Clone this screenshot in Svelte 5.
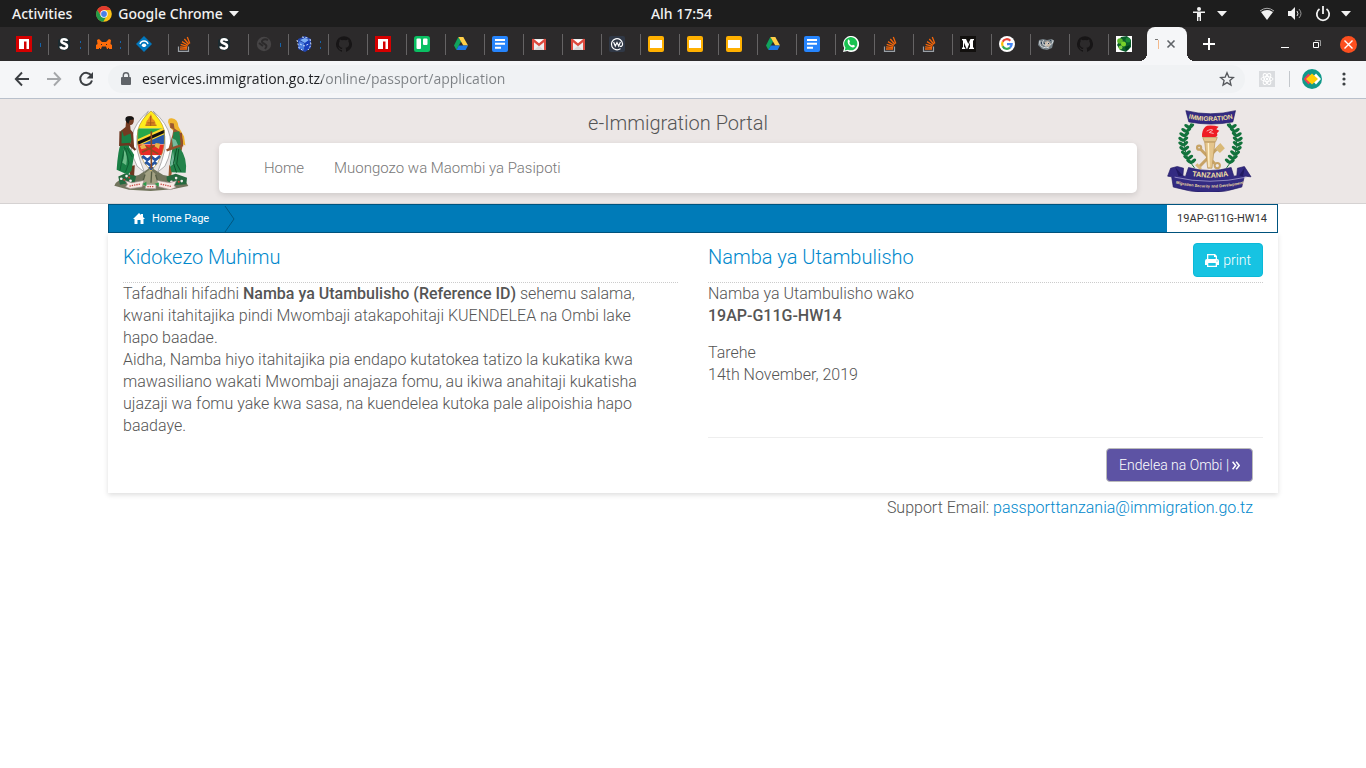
<script>
  const tabs = [
    ['npm', 'one'], ['s', 'two'], ['fox', 'two'], ['diamond', ''], ['stack', ''], ['s', ''], ['globe', 'one'], ['hex', 'two'],
    ['github', ''], ['npm', ''], ['trello', ''], ['drive', ''], ['docs', ''], ['gmail', ''], ['gmail', ''], ['workplace', ''],
    ['slides', ''], ['slides', ''], ['slides', ''], ['drive', ''], ['docs', ''], ['whatsapp', ''], ['stack', ''], ['stack', ''],
    ['medium', ''], ['google', ''], ['gnu', ''], ['github', ''], ['green', '']
  ];
  const leaves = [0, 1, 2, 3, 4, 5, 6, 7, 8];
  const leafX = [202, 193, 187, 184, 184, 187, 192, 199, 208];
  const leafY = [84, 96, 109, 123, 137, 151, 165, 178, 190];
  let address = $state('eservices.immigration.go.tz/online/passport/application');
</script>

{#snippet favicon(kind)}
  <svg class="fav" viewBox="0 0 16 16" aria-hidden="true">
    {#if kind === 'npm'}
      <path fill="#d50000" d="M0 0h16v16H0z" /><path fill="#fff" d="M3 3h10v10h-2.500V5.500H8V13H3z" />
    {:else if kind === 's'}
      <path fill="#1b2a30" d="M2 4 8 1l6 3v8l-6 3-6-3z" />
      <path fill="none" stroke="#fff" stroke-width="2.600" d="M11 5C10.600 2.800 5.400 2.300 5.400 5.200c0 2.800 5.600 1.900 5.600 4.900 0 3.500-6 3-6.400.3" />
    {:else if kind === 'fox'}
      <path fill="#ff6c0a" d="M0 13V9l1.500-1L1 4l2-1 3 3h4l3-3 2 1-.5 4L16 9v4h-5l-1-2.500H6L5 13z" /><path fill="#2c2a2b" d="M3 12h1v1H3zm9 0h1v1h-1zM5 8h1v1H5zm5 0h1v1h-1z" />
    {:else if kind === 'diamond'}
      <path fill="#0277bd" d="M8 0l8 8-8 8-8-8z" /><path fill="none" stroke="#fff" stroke-width="1.300" d="M4 8.200a4.100 4.100 0 0 1 8 0" /><path fill="#fff" d="M5.500 9.500a2.600 2.600 0 0 1 5 0L9 11H7z" />
    {:else if kind === 'stack'}
      <path fill="none" stroke="#9aa0a6" stroke-width="1.200" d="M2.500 10.500v4.900h10v-4.900" />
      <path stroke="#f4660a" stroke-width="1.300" d="M4 13h7M4.100 10.900l7 .8M4.700 8.400l6.700 1.900M6 5.600l6 3.700M8.300 3l4.600 5.300M11.300 1l2.500 6.500" />
    {:else if kind === 'globe'}
      <circle cx="8" cy="8" r="7.200" fill="#464445" /><path fill="none" stroke="#2c2a2b" stroke-width="2" d="M12 4c-4-2-8 1-5 3s5 2 2 6M3 7l4 3" />
    {:else if kind === 'hex'}
      <path fill="#2446ad" d="M2 3l7-3 6 3v9l-6 4-7-3z" /><path fill="#7fb0f5" d="M4 4l5-2 4 2-4 3z" /><path fill="#173fbd" d="M9 7l4-3v8l-4 3z" /><path fill="#4c7fe0" d="M3 5l5 2v7l-5-2z" /><path fill="none" stroke="#cfe0ff" stroke-dasharray="2 1.500" d="M1 4l2 8 5 3M14 3l1 6-3 5M4 8l4 2 5-2M6 1l6 1" />
    {:else if kind === 'github'}
      <path fill="#171516" d="M8 .2a8 8 0 0 0-2.500 15.600c.4.100.5-.2.500-.4v-1.500c-2.200.5-2.700-.9-2.700-.9-.4-.9-.9-1.200-.9-1.200-.7-.5.1-.5.1-.5.800.1 1.200.8 1.200.8.700 1.200 1.900.9 2.300.7.100-.5.300-.9.500-1.100-1.800-.2-3.600-.9-3.600-4 0-.9.300-1.600.8-2.100-.1-.2-.4-1 .1-2.200 0 0 .7-.2 2.200.8a7.600 7.600 0 0 1 4 0c1.500-1 2.200-.8 2.200-.8.500 1.200.2 2 .1 2.200.5.500.8 1.200.8 2.100 0 3.100-1.900 3.800-3.700 4 .3.300.6.800.6 1.500v2.200c0 .2.100.500.500.4A8 8 0 0 0 8 .2z" />
    {:else if kind === 'trello'}
      <rect width="16" height="16" rx="2.500" fill="#0abf62" /><rect x="2.500" y="2.500" width="4.500" height="10.500" rx="1" fill="#fff" /><rect x="9" y="2.500" width="4.500" height="6.500" rx="1" fill="#fff" />
    {:else if kind === 'drive'}
      <path fill="#10a35d" d="M5.300 1 1 9.500 3.400 14 8 5.600z" /><path fill="#ffcf48" d="M5.300 1h5L15 9.500h-4.700z" /><path fill="#1c79e8" d="M5.800 9.500H15L12.600 14H3.400z" />
    {:else if kind === 'docs'}
      <rect width="16" height="16" rx="2" fill="#2684fc" /><path fill="#fff" d="M3 3h10v2H3zm0 3.700h10v2H3zm0 4h6v2H3z" />
    {:else if kind === 'gmail'}
      <path fill="#eee" d="M1 3h14v11H1z" /><path fill="#fff" d="M3 4h10l-5 4z" /><path fill="#d8d8d8" d="m3 14 5-4 5 4z" /><path fill="#dc4a3e" d="M1 14V3l1.500-.3L8 7.200l5.500-4.500L15 3v11h-2V6.200l-5 4-5-4V14z" />
    {:else if kind === 'workplace'}
      <rect width="16" height="16" rx="2" fill="#303846" /><path fill="none" stroke="#fff" stroke-width="1.200" d="M11.500 12.600A5.600 5.600 0 1 1 13.600 8c0 2.200-1.800 2.800-2.800 2.200M4.600 6l1.700 4L8 6.500 9.700 10l1.700-4" />
    {:else if kind === 'slides'}
      <rect width="16" height="16" rx="2" fill="#ffb000" /><path fill="#fff" d="M2 4h12v8H2z" />
    {:else if kind === 'whatsapp'}
      <path fill="#fff" d="M0 16 1.200 12A8 8 0 1 1 4.300 15z" /><path fill="#19c251" d="m1.700 14.400.8-2.700A6.600 6.600 0 1 1 5 13.700z" /><path fill="#fff" d="M5 3.800c1-1 1.300.2 1.900 1.700L6.300 7c.5 1.200 1.400 2 2.700 2.600l1-.9c1.800.8 2.400.9 1.600 2-2 2.600-8.500-2-6.600-6.900z" />
    {:else if kind === 'medium'}
      <path fill="#12100e" d="M0 0h16v16H0z" /><path fill="#fff" d="M2 3h4l2.300 5L10.500 3H14v1l-1 .8v6.500l1 .8v.9H9v-.9l1-.8V6L7.200 13h-.5L4 6.500v4.600l1.300 1v.9H2v-.9l1-1V4.800L2 4z" />
    {:else if kind === 'google'}
      <circle cx="8" cy="8" r="8" fill="#fff" />
      <g fill="none" stroke-width="2.200"><path stroke="#ea4335" d="M3.700 5.800A4.700 4.700 0 0 1 11.300 4.700" /><path stroke="#fbbc05" d="M3.700 10.200a4.700 4.700 0 0 1 0-4.400" /><path stroke="#34a853" d="M3.700 10.200A4.700 4.700 0 0 0 11 11.700" /><path stroke="#4285f4" d="M11 11.700A4.700 4.700 0 0 0 12.700 8.100H8" /></g>
    {:else if kind === 'gnu'}
      <path fill="#78838a" d="M1 4l4-1 4 1 5-1 2 2-1 3-1 4-5 2-5-1-4-4z" /><path fill="#c9b8a6" d="M7 6l3-1 3 3-2 3-4-1z" /><path fill="none" stroke="#d9dde0" d="M2 5c-1 3 1 6 3 6M6 4c-2 2-2 4 0 5s4-1 4-3M15 4c0 3-1 4-3 5M5 12l3-1 3 1" /><path fill="#2d3f55" d="M6 7h1v1H6zm4 0h1v1h-1zM3 6h1v2H3zM12 4h1v1h-1z" />
    {:else if kind === 'green'}
      <path fill="#fff" d="M0 0h16v16H0z" /><path fill="#0b5d2c" d="M5 1l6-1 4 4v7l-5 5-6-2-3-5z" /><circle cx="4" cy="5" r="2.800" fill="#58b52c" /><circle cx="7.500" cy="8" r="2.500" fill="#79d129" /><circle cx="12" cy="4" r="2.500" fill="#1a8a39" /><circle cx="4.500" cy="11.500" r="2" fill="#7bc943" /><path fill="#033f1d" d="m9 11 5-2-1 4-3 2z" />
    {/if}
  </svg>
{/snippet}

{#snippet caret()}
  <svg class="caret" viewBox="0 0 10 6" aria-hidden="true"><path fill="#f2f2f2" d="M0 0h10L5 5.500z" /></svg>
{/snippet}

<header class="desktop">
  <div class="side">
    <button>Activities</button>
    <button class="app-menu">
      <svg width="16" height="16" viewBox="0 0 16 16" aria-hidden="true">
        <circle cx="8" cy="8" r="7.800" fill="#fbc116" /><path fill="#e33b2e" d="M1.200 4A7.800 7.800 0 0 1 14.800 4H8L5 9.500z" /><path fill="#229a4b" d="M1.200 4A7.800 7.800 0 0 0 7.300 15.800L10.500 10 5 9.800z" /><circle cx="8" cy="8" r="3.700" fill="#fff" /><circle cx="8" cy="8" r="2.900" fill="#4a80e8" />
      </svg>
      Google Chrome {@render caret()}
    </button>
  </div>
  <button>Alh 17:54</button>
  <div class="side end">
    <button class="access" aria-label="Accessibility">
      <svg width="12" height="16" viewBox="0 0 12 16"><circle cx="6" cy="3" r="2" fill="#f2f2f2" /><path fill="#f2f2f2" d="M0 5.500h12V7H8v8H6.600v-4H5.400v4H4V7H0z" /></svg>
      {@render caret()}
    </button>
    <button class="status" aria-label="System">
      <svg width="16" height="16" viewBox="0 0 16 16"><path fill="none" stroke="#aaa" d="M1 5q7-5.500 14 0" /><path fill="#f2f2f2" d="M2 6q6-4 12 0l-6 8z" /></svg>
      <svg width="16" height="16" viewBox="0 0 16 16"><path fill="#f2f2f2" d="M1 5h3l4-4v13l-4-4H1z" /><path fill="none" stroke="#ddd" d="M10 5q2 3 0 5" /><path fill="none" stroke="#999" d="M12 3q4 4.500 0 9" /></svg>
      <svg width="16" height="16" viewBox="0 0 16 16"><path fill="none" stroke="#f2f2f2" stroke-width="1.800" d="M4.500 3a6.200 6.200 0 1 0 7 0M8 0v8" /></svg>
      {@render caret()}
    </button>
  </div>
</header>

<div class="tabs">
  {#each tabs as [kind, mark], i}
    <button class="tab {mark}" class:wide={i < 8} class:last={i === tabs.length - 1} aria-label="Tab {i + 1}">{@render favicon(kind)}</button>
  {/each}
  <button class="tab active" aria-label="Close tab">
    <svg width="4" height="12" viewBox="0 0 4 12"><path fill="none" stroke="#777" d="M0 1.500h3" /><path stroke="#f3b98c" d="M3.500 2v9" /></svg>
    <svg width="10" height="10" viewBox="0 0 10 10"><path stroke="#5f6368" stroke-width="1.600" d="m1.500 1.500 7 7m0-7-7 7" /></svg>
  </button>
  <button class="plus" aria-label="New tab"><svg width="12" height="12" viewBox="0 0 12 12"><path stroke="#fff" stroke-width="2" d="M0 6h12M6 0v12" /></svg></button>
  <div class="window">
    <button aria-label="Minimise"><svg width="8" height="10" viewBox="0 0 8 10"><path stroke="#fff" d="M0 8.500h8" /></svg></button>
    <button aria-label="Restore"><svg width="8" height="8" viewBox="0 0 8 8"><path fill="none" stroke="#fff" d="M.5 2.500h5v5h-5z" /><path fill="none" stroke="#999" d="M2 .5h5.500V6" /></svg></button>
    <button class="close" aria-label="Close"><svg width="9" height="9" viewBox="0 0 9 9"><path stroke="#fff" stroke-width="1.400" d="m.5.500 8 8m0-8-8 8" /></svg></button>
  </div>
</div>

<div class="toolbar">
  <button aria-label="Back"><svg width="16" height="16" viewBox="0 0 16 16"><path fill="none" stroke="#3c3f43" stroke-width="1.900" d="M15 8H2m6-6.500L1.800 8 8 14.500" /></svg></button>
  <button aria-label="Forward"><svg width="16" height="16" viewBox="0 0 16 16"><path fill="none" stroke="#a5a7aa" stroke-width="1.900" d="M1 8h13M8 1.500 14.200 8 8 14.500" /></svg></button>
  <button aria-label="Reload"><svg width="16" height="16" viewBox="0 0 16 16"><path fill="none" stroke="#3c3f43" stroke-width="2" d="M13.400 4.800A6 6 0 1 0 14 9.500" /><path fill="#3c3f43" d="M15 1v6.500H8.500z" /></svg></button>
  <div class="omnibox">
    <svg width="10" height="14" viewBox="0 0 10 14" aria-hidden="true"><rect y="5" width="10" height="8" rx="1" fill="#5f6368" /><path fill="none" stroke="#5f6368" stroke-width="1.400" d="M2.300 6V3.500a2.700 2.700 0 0 1 5.400 0V6" /></svg>
    <input aria-label="Address" bind:value={address} />
    <button aria-label="Bookmark"><svg width="16" height="16" viewBox="0 0 16 16"><path fill="none" stroke="#55585c" stroke-width="1.300" d="m8 1.800 1.800 4.300 4.600.4-3.500 3 1.100 4.600L8 11.600l-4 2.500 1.100-4.600-3.500-3 4.600-.4z" /></svg></button>
  </div>
  <button class="react" aria-label="React extension"><svg width="16" height="16" viewBox="0 0 16 16"><path fill="#dadcdf" d="M0 0h16v16H0z" /><g fill="none" stroke="#fff"><ellipse cx="8" cy="8" rx="6" ry="2.400" /><ellipse cx="8" cy="8" rx="6" ry="2.400" transform="rotate(60 8 8)" /><ellipse cx="8" cy="8" rx="6" ry="2.400" transform="rotate(120 8 8)" /></g><circle cx="8" cy="8" r="1.200" fill="#fff" /></svg></button>
  <span class="rule"></span>
  <button aria-label="Profile"><svg width="20" height="20" viewBox="0 0 20 20"><circle cx="10" cy="10" r="10" fill="#11998a" /><path fill="#fff" d="m14 4.500 5 5.500-5 5.500-5-5.500z" /><path fill="#ee3f55" d="m6.500 4.500-5 5.500 5 5.500 5-5.500z" /><path fill="#ffcf05" d="m10 4.500 6 5.500-6 5.500L4 10z" /></svg></button>
  <button class="menu" aria-label="Menu"><svg width="4" height="14" viewBox="0 0 4 14"><g fill="#3c4043"><circle cx="2" cy="2" r="1.600" /><circle cx="2" cy="7" r="1.600" /><circle cx="2" cy="12" r="1.600" /></g></svg></button>
</div>

<div class="masthead">
  <div class="bounds brand">
    <svg class="arms" viewBox="38 35 230 246" role="img" aria-label="Coat of arms">
      <path fill="#71745c" d="M42 263q8-20 38-24l36-8 36-24 38 24 42 8q28 8 34 25l-48 10-66 5-66-4z" />
      <path fill="#a3a183" d="m123 263 12-38 15-12 16 14 12 36z" /><path stroke="#545b43" stroke-width="4" d="m135 229-8 26m28-35-2 34m14-24 7 23" />
      <path fill="#fff" stroke="#8a8a8a" stroke-width="2" d="M145 38Q62 108 111 204l22 18-12-32Q88 113 145 38zM160 38q84 70 35 166l-22 18 12-32q32-77-25-152z" />
      <clipPath id="shield"><path d="M153 37q31 25 40 58 9 75-40 124-49-49-40-124 9-33 40-58z" /></clipPath>
      <g clip-path="url(#shield)">
        <path fill="#ffeb1c" d="M100 30h110v60H100z" /><path fill="#27a84a" d="M100 90h110v47H100z" /><path fill="#285aaa" d="m194 90 20 47h-94z" />
        <path fill="#ffd92e" d="m100 128 96-43h12v16l-96 43z" /><path fill="#111" d="m100 135 108-48v10l-108 48z" />
        <path fill="#e72c26" d="M100 138h110v33H100z" /><path fill="#fff" d="M100 171h110v52H100z" />
        <path fill="none" stroke="#2455a4" stroke-width="8" d="m105 175 13 10 12-10 12 10 12-10 12 10 12-10 12 10 12-10m-87 18 13 10 12-10 12 10 12-10 12 10 12-10M125 208l14 8 14-8 14 8 14-8" />
      </g>
      <path d="M153 37q31 25 40 58 9 75-40 124-49-49-40-124 9-33 40-58z" fill="none" stroke="#b89738" stroke-width="2" />
      <path fill="#e58c23" d="M137 80q1-14 7-17l9-17 5 15q10 5 9 19z" /><path stroke="#a85b18" stroke-width="3" d="M136 80h34M142 73h22M152 52v30" />
      <path stroke="#8e4b20" stroke-width="5" d="M154 98v113m-28-49 51-26m-46 5 44 26" /><path fill="#e8b34a" d="m119 143 14-6 6 12-15 4zm48-9 14 2-4 16-13-8z" />
      <path fill="#743b22" d="M78 63q0-11 12-10 13 0 11 14-2 13-11 12l1 14 8 10 3 46-10-3-5-30-3 32-26-5 4-46 14-12z" />
      <path fill="#151515" d="M76 66q-3-13 11-13 15-1 14 10l-12 1-5 12z" />
      <path fill="#6b3720" d="m82 205 22-4-2 30 4 5H92z" />
      <path fill="#1a8046" d="m60 101 5-5 6 17 20-8 3 20-8 21 16 23-8 48-11 13-34-15q4-61 13-80z" />
      <path fill="#6cbb88" d="M68 149q17 20 10 52l-12-8q10-25 2-44z" /><path fill="none" stroke="#0a4f2b" stroke-width="2" d="m73 145-14 72m17-68 10 45-10 27m4-73 16 28" />
      <path fill="none" stroke="#6b3720" stroke-width="7" d="m61 98-1 41 27-2 19 18" />
      <path fill="#efb42e" d="M205 72q-2-14 11-13 18 1 20 25l17 30 4 27-18-8-11-29-17-16z" />
      <path fill="#9b5731" d="m211 73 11 2 2 15 18 12 8 28-4 27-29-6-12 3 13-45 3-17-10-4zM208 200l-2 35h8l4-26" />
      <path fill="#23834a" d="m221 101 18-3 5 44-3 8q23 30 17 74l-43-2-5-23 7-44 2-35z" /><path fill="#77b99c" d="m216 119 12 6 9 20-16 6zM220 158l4 38-14 10z" /><path fill="none" stroke="#0c5028" stroke-width="3" d="m231 150-10 45 9 28m7-71-6 45 13 24" />
      <path fill="none" stroke="#934f2b" stroke-width="7" d="m243 103 4 38-15 4-32 11" />
      <path fill="#24693e" d="m54 235 20-9 34 8-4 18-45 8zm146 0 28-8 34 12-2 20-39 3-20-15z" />
      <g fill="#f4eded"><circle cx="63" cy="242" r="4" /><circle cx="79" cy="234" r="4" /><circle cx="91" cy="248" r="4" /><circle cx="229" cy="240" r="4" /><circle cx="246" cy="249" r="4" /><circle cx="215" cy="251" r="4" /></g>
      <g fill="#d13b33"><circle cx="72" cy="245" r="3" /><circle cx="87" cy="238" r="3" /><circle cx="237" cy="251" r="3" /></g>
      <path fill="#f7e9e5" stroke="#9a8c88" stroke-width="2" d="m75 248 20 6 37-7-6 20-35 5-15-5 6-8zm96-1 39 7 20-6-7 15 6 5-18 7-35-9zM136 259h32v13h-32z" /><path fill="none" stroke="#ca4a46" stroke-width="4" stroke-dasharray="4 3" d="m88 264 32-6m22 8h20m20-8 32 7" />
      <path fill="#2d9b4b" d="m127 258 12-7v14zm50-5-13 4 12 9z" />
    </svg>
    <div class="middle">
      <h1>e-Immigration Portal</h1>
      <nav><a href="#home">Home</a><a href="#guide">Muongozo wa Maombi ya Pasipoti</a></nav>
    </div>
    <svg class="badge" viewBox="140 38 260 246" role="img" aria-label="Immigration Tanzania, Migration Security and Development">
      {#each [0, 1] as side}
        <g transform={side ? 'translate(543 0) scale(-1 1)' : ''}>
          <path fill="none" stroke="#16713d" stroke-width="3" d="M214 76q-47 68 9 136" />
          {#each leaves as i}
            <g fill="#12723c" transform="translate({leafX[i] + 5} {leafY[i] + 8})">
              <ellipse cx="-8" cy="-1" rx="10" ry="5" transform="rotate(35)" /><ellipse cx="9" cy="-1" rx="10" ry="5" transform="rotate(-38)" />
            </g>
          {/each}
        </g>
      {/each}
      <g stroke="#c7a366" stroke-width="9" fill="none"><path d="m240 154 44 45M300 145l-61 62" /><circle cx="237" cy="151" r="6" stroke-width="7" /><circle cx="292" cy="205" r="8" stroke-width="6" /></g>
      <path fill="#d9b977" d="m286 154 15-17 14 16-15 14zM232 198l14 15-7 5-14-14z" />
      <path fill="#e4c58c" stroke="#b89155" stroke-width="2" d="M248 120h44l-5 13h-34zm6 14h31l-9 79h-13z" /><path stroke="#fff2cc" stroke-width="4" d="m265 137 2 72" />
      <path fill="#ef1c24" d="M246 119q-2-19 10-31 5-6 29-3l11 3-7 7 9 5-7 7q4 9-5 12z" /><path fill="none" stroke="#fff" stroke-width="2" d="M260 101q14-8 18-3l-10 7 13 3" />
      <path fill="#332b82" stroke="#221c63" stroke-width="2" d="M197 39q75 19 150 0l-8 34q-66 13-133 0z" />
      <path id="arc-top" fill="none" d="M202 62q68 17 141 0" /><text class="badge-text" font-size="20"><textPath href="#arc-top" startOffset="50%">IMMIGRATION</textPath></text>
      <path fill="#332b82" stroke="#211a63" stroke-width="2" d="m142 237 9-24 20-5 19 5-2 23 8 2 9-27q63 18 129 0l8 26 9-1 2-23 21-5 20 31-20-2-8 33q-98 33-207 0l-5-31z" />
      <path fill="#211a63" d="m165 210 10 27 13-2zm193 25 17-25-5 28z" />
      <path fill="none" stroke="#bdb6df" stroke-width="2" d="M163 240q105 25 218 0" />
      <path id="arc-mid" fill="none" d="M203 234q69 15 135 0" /><text class="badge-text" font-size="22"><textPath href="#arc-mid" startOffset="50%">TANZANIA</textPath></text>
      <path id="arc-low" fill="none" d="M160 258q110 27 219 0" /><text class="badge-text" font-size="12"><textPath href="#arc-low" startOffset="50%">Migration Security and Development</textPath></text>
    </svg>
  </div>
</div>

<main class="bounds">
  <div class="crumbs">
    <a href="#home"><svg width="12" height="11" viewBox="0 0 12 11" aria-hidden="true"><path fill="#fff" d="M6 0l2 2V1h2v3l2 2h-1.500v5h-3V7h-3v4h-3V6H0z" /></svg>Home Page</a>
    <svg class="chevron" width="12" height="28" viewBox="0 0 12 28" aria-hidden="true"><path fill="none" stroke="#005780" d="m1 1 9 13-9 13" /></svg>
    <span class="ref">19AP-G11G-HW14</span>
  </div>
  <div class="panel">
    <section>
      <div class="heading"><h2>Kidokezo Muhimu</h2></div>
      <p class="notice">Tafadhali hifadhi <b>Namba ya Utambulisho (Reference ID)</b> sehemu salama, kwani itahitajika pindi Mwombaji atakapohitaji KUENDELEA na Ombi lake hapo baadae.<br />Aidha, Namba hiyo itahitajika pia endapo kutatokea tatizo la kukatika kwa mawasiliano wakati Mwombaji anajaza fomu, au ikiwa anahitaji kukatisha ujazaji wa fomu yake kwa sasa, na kuendelea kutoka pale alipoishia hapo baadaye.</p>
    </section>
    <section>
      <div class="heading"><h2>Namba ya Utambulisho</h2>
        <button class="print"><svg width="14" height="14" viewBox="0 0 14 14" aria-hidden="true"><path fill="#fff" fill-rule="evenodd" d="M2 6V1h8l2 2v3q2 0 2 2v4h-2v2H2v-2H0V8q0-2 2-2zm1.300 0h7.400V4H9V2.300H3.300zm0 4v2.700h7.400V10zm8.200-2.500v1h1v-1z" /></svg>print</button>
      </div>
      <p>Namba ya Utambulisho wako<br /><b>19AP-G11G-HW14</b></p>
      <p class="date">Tarehe<br />14th November, 2019</p>
      <div class="actions">
        <button class="next">Endelea na Ombi | <svg width="8" height="9" viewBox="0 0 8 9" aria-hidden="true"><path fill="none" stroke="#fff" stroke-width="1.500" d="m.6.700 3 3.800-3 3.800m3.600-7.600 3 3.800-3 3.800" /></svg></button>
      </div>
    </section>
  </div>
  <footer>Support Email: <a href="mailto:passporttanzania@immigration.go.tz">passporttanzania@immigration.go.tz</a></footer>
</main>

<style>
  :global(body) { margin: 0; background: #fff; color: #555; font: 300 16px/22px Roboto, sans-serif; }
  :global(*) { box-sizing: border-box; }
  button { border: 0; padding: 0; background: none; color: inherit; font: inherit; display: flex; align-items: center; }
  a { text-decoration: none; }
  svg { flex: none; display: block; }
  h1, h2, p { margin: 0; font-weight: 300; }

  .desktop { display: flex; align-items: center; height: 27px; padding: 0 15px 0 12px; background: #1d1d1d; color: #f2f2f2; font: 500 14px/26px "Noto Sans", sans-serif; }
  .side { flex: 1; display: flex; gap: 24px; }
  .end { justify-content: flex-end; gap: 32px; }
  .app-menu { gap: 6px; }
  .caret { width: 10px; height: 6px; }
  .access, .status { gap: 12px; }
  .status .caret { margin-left: -2px; }

  .tabs { display: flex; height: 34px; padding: 0 9px; background: #2c2a2b; }
  .tab { position: relative; flex: none; width: 39px; padding-left: 7px; }
  .tab.wide { width: 40px; }
  .tab.last { width: 38px; }
  .tab::after { content: ""; position: absolute; right: 0; top: 7px; width: 1px; height: 21px; background: #656364; }
  .tab.last::after { display: none; }
  .fav { width: 16px; height: 16px; }
  .one::before, .two::before { content: ""; position: absolute; left: 31px; top: 16px; width: 1px; height: 4px; background: #1662a7; }
  .two::before { top: 14px; height: 8px; background: linear-gradient(#1662a7 2px, transparent 2px 6px, #1662a7 6px); }
  .tab.active { width: 40px; padding: 0 11px 0 8px; justify-content: space-between; border-radius: 8px 8px 0 0; background: #f5f6f8; margin-right: 16px; }
  .tab.active::before, .tab.active::after { content: ""; position: absolute; top: auto; bottom: 0; width: 8px; height: 8px; background: radial-gradient(circle at 0 0, transparent 8px, #f5f6f8 8px); }
  .tab.active::before { left: -8px; }
  .tab.active::after { right: -8px; background: radial-gradient(circle at 100% 0, transparent 8px, #f5f6f8 8px); }
  .window { display: flex; align-items: center; gap: 24px; margin-left: auto; }
  .close { width: 17px; height: 17px; border-radius: 50%; background: #fc4f1f; justify-content: center; }
  .window .close { margin-left: -5px; }

  .toolbar { display: flex; align-items: center; gap: 16px; height: 38px; padding: 0 20px 1px 14px; background: #f5f6f8; border-bottom: 1px solid #b9c0cb; }
  .omnibox { flex: 1; display: flex; align-items: center; gap: 11px; height: 28px; margin-left: -2px; padding: 0 10px 0 13px; border-radius: 14px; background: #f0f2f4; }
  .omnibox input { flex: 1; min-width: 0; border: 0; padding: 0; outline: 0; font: 14px/20px "Open Sans", sans-serif; color: #202124; -webkit-text-fill-color: transparent; background: linear-gradient(90deg, #202124 180px, #7c8084 180px); background-clip: text; -webkit-background-clip: text; }
  .react { margin-left: -2px; }
  .rule { width: 1px; height: 16px; margin: 0 -4px 0 -2px; background: #c3c7cc; }
  .menu { margin-left: 4px; }

  .bounds { max-width: 1170px; margin: 0 auto; position: relative; left: 10px; }
  .masthead { height: 105px; background: #ece7e6; border-bottom: 1px solid #d5d2d2; }
  .brand { display: flex; align-items: flex-start; gap: 30px; padding: 11px 25px 0 5px; }
  .arms { width: 76px; height: 82px; }
  .badge { width: 86px; height: 82px; }
  .badge-text { fill: #f0dfa2; text-anchor: middle; font-family: "Liberation Sans", sans-serif; font-weight: 700; }
  .middle { flex: 1; }
  h1 { font-size: 20px; line-height: 26px; padding-bottom: 7px; text-align: center; }
  nav { display: flex; gap: 30px; height: 50px; padding: 0 45px; line-height: 50px; border-radius: 5px; background: #fff; box-shadow: 0 2px 6px #0002; }
  nav a { color: #777; font-size: 15px; }

  .crumbs { display: flex; height: 29px; border: 1px solid #00547f; background: #007bb8; font-size: 11px; line-height: 27px; font-weight: 400; }
  .crumbs a { display: flex; align-items: center; gap: 7px; padding-left: 24px; color: #fff; }
  .chevron { margin-left: 15px; }
  .ref { margin-left: auto; padding: 0 10px; background: #fff; color: #333; }
  .panel { display: grid; grid-template-columns: 1fr 1fr; gap: 30px; padding: 9px 15px 11px; background: #fff; box-shadow: 0 2px 5px #0002; }
  .heading { display: flex; justify-content: space-between; align-items: flex-start; height: 41px; border-bottom: 1px dotted #ccc; }
  h2 { color: #0088cc; font-size: 20px; line-height: 30px; }
  b { font-weight: 500; }
  .notice { padding-right: 20px; }
  .date { margin-top: 15px; }
  .print { gap: 4px; height: 34px; margin-top: 1px; padding: 0 11px; border: 1px solid #0bb9d8; border-radius: 4px; background: #17c3e2; color: #fff; font-size: 14px; }
  .actions { display: flex; justify-content: flex-end; margin-top: 51px; padding: 10px 10px 0 0; border-top: 1px solid #eee; }
  .next { gap: 3px; height: 34px; padding: 0 12px; border: 1px solid #bbb; border-radius: 4px; background: #5d53a4; color: #fff; font-size: 14px; }
  footer { padding: 4px 25px 0 0; text-align: right; }
  footer a { color: #0088cc; }
</style>
